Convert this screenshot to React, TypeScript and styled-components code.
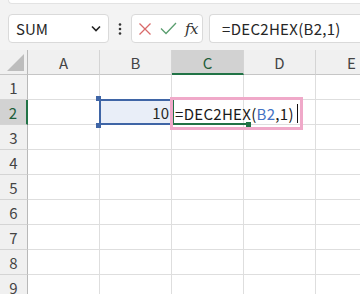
import React from "react";
import styled, { createGlobalStyle } from "styled-components";

const Global = createGlobalStyle`
  html, body { margin: 0; padding: 0; }
  body { background: #f3f3f3; font-family: "Noto Sans CJK JP", "Noto Sans", sans-serif; }
`;

const Page = styled.div`
  width: 360px;
  height: 294px;
  overflow: hidden;
  background: #f3f3f3;
`;

const TopStrip = styled.div`
  margin-left: 8px;
  height: 4px;
  background: #fff;
  border-left: 1px solid #e3e3e3;
  border-bottom: 1px solid #e3e3e3;
  border-bottom-left-radius: 5px;
  box-sizing: border-box;
`;

const Toolbar = styled.div`
  display: flex;
  align-items: center;
  padding: 10px 0 0 8px;
  height: 29px;
`;

const Box = styled.div`
  box-sizing: border-box;
  height: 29px;
  background: #fff;
  border: 1px solid #dadada;
  border-radius: 4px;
  display: flex;
  align-items: center;
`;

const NameBox = styled(Box)`
  width: 101px;
  padding: 0 7px 0 7px;
  justify-content: space-between;
  font-size: 15px;
  color: #262626;
`;

const Dots = styled.div`
  width: 22px;
  display: flex;
  justify-content: center;
`;

const ButtonGroup = styled(Box)`
  width: 72px;
  padding: 0 4px 0 6px;
  justify-content: space-between;
`;

const Fx = styled.span`
  font-family: "DejaVu Serif", "Liberation Serif", serif;
  font-style: italic;
  font-size: 15px;
  color: #333;
  letter-spacing: -0.5px;
`;

const FormulaInput = styled(Box)`
  flex: 1;
  margin-left: 6px;
  border-right: none;
  border-top-right-radius: 0;
  border-bottom-right-radius: 0;
  padding-left: 12px;
  font-size: 15px;
  letter-spacing: 0.3px;
  color: #262626;
`;

const Sheet = styled.div`
  margin-top: 7px;
  display: grid;
  grid-template-columns: 28px 72px 72px 72px 72px 72px;
  grid-auto-rows: 25px;
  background: #fff;
`;

const HeadCell = styled.div<{ $sel?: boolean }>`
  box-sizing: border-box;
  background: ${(p) => (p.$sel ? "#d2d2d2" : "#f0f0f0")};
  border-right: 1px solid #d4d4d4;
  border-bottom: ${(p) => (p.$sel ? "2px solid #217346" : "1px solid #c6c6c6")};
  display: flex;
  align-items: center;
  justify-content: center;
  font-size: 15px;
  color: ${(p) => (p.$sel ? "#1e5e3a" : "#444")};
  padding-top: ${(p) => (p.$sel ? "1px" : "0")};
`;

const Corner = styled.div`
  box-sizing: border-box;
  background: #f0f0f0;
  border-right: 1px solid #b8b8b8;
  border-bottom: 1px solid #c6c6c6;
  position: relative;
`;

const CornerTri = styled.div`
  position: absolute;
  right: 3px;
  bottom: 3px;
  width: 0;
  height: 0;
  border-left: 17px solid transparent;
  border-bottom: 17px solid #bdbdbd;
`;

const RowHead = styled.div<{ $sel?: boolean }>`
  box-sizing: border-box;
  background: ${(p) => (p.$sel ? "#d2d2d2" : "#f0f0f0")};
  border-right: ${(p) => (p.$sel ? "2px solid #217346" : "1px solid #b8b8b8")};
  border-bottom: 1px solid #d4d4d4;
  display: flex;
  align-items: center;
  justify-content: center;
  font-size: 15px;
  color: ${(p) => (p.$sel ? "#1e5e3a" : "#444")};
`;

const Cell = styled.div`
  box-sizing: border-box;
  border-right: 1px solid #dedede;
  border-bottom: 1px solid #dedede;
  position: relative;
`;

const RangeCell = styled(Cell)`
  z-index: 1;
`;

const RangeBox = styled.div`
  position: absolute;
  left: -1px;
  top: -1px;
  right: -1px;
  bottom: -1px;
  border: 2px solid #3f65a6;
  background: #e9eef8;
  display: flex;
  align-items: center;
  justify-content: flex-end;
  padding-right: 1px;
  font-size: 15px;
  color: #262626;
`;

const Handle = styled.div<{ $pos: "tl" | "bl" }>`
  position: absolute;
  width: 5px;
  height: 5px;
  background: #3f65a6;
  left: -4px;
  ${(p) => (p.$pos === "tl" ? "top: -4px;" : "bottom: -4px;")}
`;

const ActiveCell = styled(Cell)`
  z-index: 2;
`;

const ActiveBorder = styled.div`
  position: absolute;
  left: 0;
  top: -1px;
  width: 73px;
  bottom: -1px;
  border-left: 2px solid #217346;
  border-bottom: 2px solid #217346;
`;

const FillHandle = styled.div`
  position: absolute;
  right: -4px;
  bottom: -4px;
  width: 5px;
  height: 5px;
  background: #217346;
`;

const Editor = styled.div`
  position: absolute;
  left: -2px;
  top: -3px;
  width: 133px;
  height: 33px;
  box-sizing: border-box;
  border: 3px solid #f0a9c9;
  display: flex;
  align-items: center;
  padding-left: 2px;
  font-size: 15px;
  letter-spacing: 0.3px;
  color: #1a1a1a;
  white-space: nowrap;
`;

const Ref = styled.span`
  color: #4472c4;
`;

const Caret = styled.span`
  display: inline-block;
  width: 1px;
  height: 19px;
  background: #111;
  margin-left: 3px;
`;

const cols = ["A", "B", "C", "D", "E"];

export default function App() {
  return (
    <Page>
      <Global />
      <TopStrip />
      <Toolbar>
        <NameBox>
          <span>SUM</span>
          <svg width="10" height="7" viewBox="0 0 10 7">
            <path d="M1 1.5 L5 5.5 L9 1.5" fill="none" stroke="#222" strokeWidth="1.6" />
          </svg>
        </NameBox>
        <Dots>
          <svg width="4" height="12" viewBox="0 0 4 12">
            <circle cx="2" cy="1.5" r="1.3" fill="#333" />
            <circle cx="2" cy="6" r="1.3" fill="#333" />
            <circle cx="2" cy="10.5" r="1.3" fill="#333" />
          </svg>
        </Dots>
        <ButtonGroup>
          <svg width="14" height="14" viewBox="0 0 14 14">
            <path d="M1.5 1.5 L12.5 12.5 M12.5 1.5 L1.5 12.5" stroke="#d96a6a" strokeWidth="1.3" />
          </svg>
          <svg width="17" height="13" viewBox="0 0 17 13">
            <path d="M1 6.5 L6 11.5 L16 1" fill="none" stroke="#5a9e6f" strokeWidth="1.3" />
          </svg>
          <Fx>fx</Fx>
        </ButtonGroup>
        <FormulaInput>=DEC2HEX(B2,1)</FormulaInput>
      </Toolbar>
      <Sheet>
        <Corner>
          <CornerTri />
        </Corner>
        {cols.map((c) => (
          <HeadCell key={c} $sel={c === "C"}>
            {c}
          </HeadCell>
        ))}
        {[1, 2, 3, 4, 5, 6, 7, 8, 9].map((r) => (
          <React.Fragment key={r}>
            <RowHead $sel={r === 2}>{r}</RowHead>
            {cols.map((c) => {
              if (r === 2 && c === "B") {
                return (
                  <RangeCell key={c}>
                    <RangeBox>10</RangeBox>
                    <Handle $pos="tl" />
                    <Handle $pos="bl" />
                  </RangeCell>
                );
              }
              if (r === 2 && c === "C") {
                return (
                  <ActiveCell key={c}>
                    <ActiveBorder>
                      <FillHandle />
                    </ActiveBorder>
                    <Editor>
                      =DEC2HEX(<Ref>B2</Ref>,1)
                      <Caret />
                    </Editor>
                  </ActiveCell>
                );
              }
              return <Cell key={c} />;
            })}
          </React.Fragment>
        ))}
      </Sheet>
    </Page>
  );
}
